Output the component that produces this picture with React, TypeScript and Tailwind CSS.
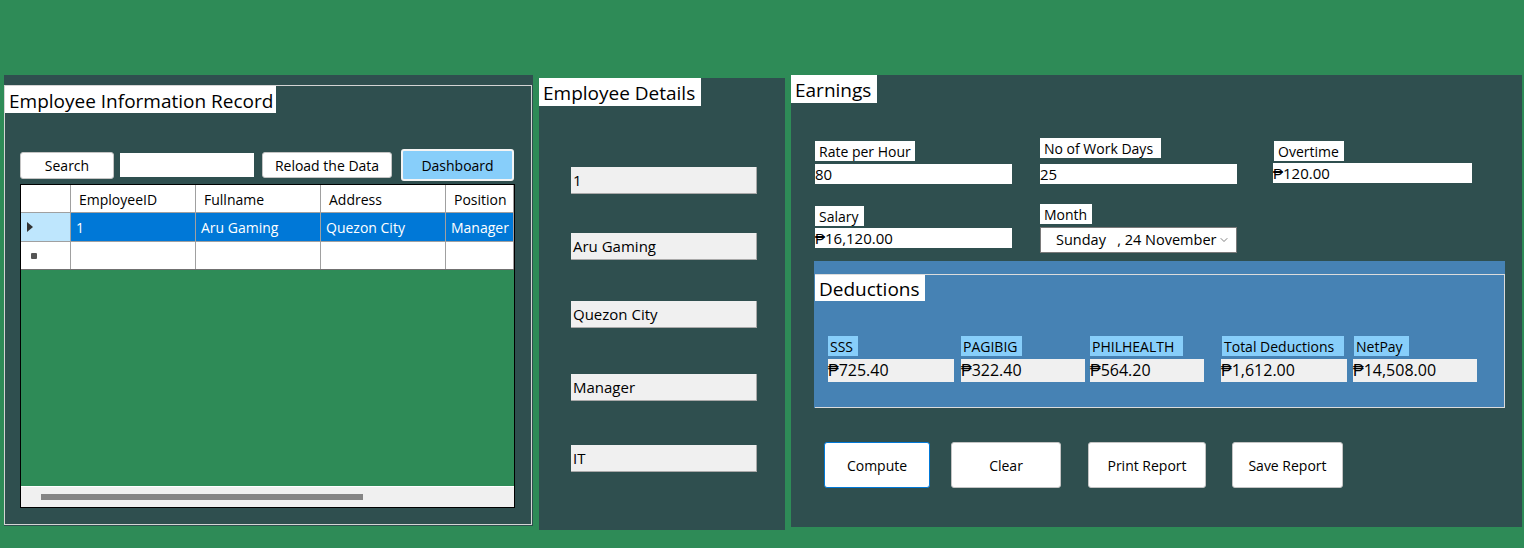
import { ChevronDown } from 'lucide-react'

const panel = 'bg-[#2F4F4F]'

function WinButton({ label, className }: { label: string; className: string }) {
    return (
        <div className={`flex items-center justify-center bg-white border border-[#c4c4c4] rounded-[3px] text-[14px] text-black ${className}`}>
            {label}
        </div>
    )
}

function GrayBox({ value, className }: { value: string; className: string }) {
    return (
        <div className={`flex items-center bg-[#F0F0F0] border-b border-r border-[#a9a9a9] pl-[2px] text-[15px] text-black ${className}`}>
            {value}
        </div>
    )
}

export default function App() {
    const columns = [
        { name: 'EmployeeID', value: '1', w: 'w-[125px]' },
        { name: 'Fullname', value: 'Aru Gaming', w: 'w-[125px]' },
        { name: 'Address', value: 'Quezon City', w: 'w-[125px]' },
        { name: 'Position', value: 'Manager', w: 'w-[68px]' }
    ]

    const deductions = [
        { label: 'SSS', value: '₱725.40', col: 'w-[126px] ml-[13px]', lab: 'w-[30px]' },
        { label: 'PAGIBIG', value: '₱322.40', col: 'w-[124px] ml-[7px]', lab: 'w-[61px]' },
        { label: 'PHILHEALTH', value: '₱564.20', col: 'w-[114px] ml-[5px]', lab: 'w-[93px]' },
        { label: 'Total Deductions', value: '₱1,612.00', col: 'w-[126px] ml-[17px]', lab: 'w-[122px] ml-[1px]' },
        { label: 'NetPay', value: '₱14,508.00', col: 'w-[124px] ml-[6px]', lab: 'w-[55px] ml-[1px]' }
    ]

    return (
        <div className="w-[1524px] h-[548px] overflow-hidden bg-[#2E8B57] flex items-start pt-[75px] pl-[4px] font-['Open_Sans',sans-serif] text-black">
            {/* Employee Information Record */}
            <div className={`${panel} w-[529px] h-[451px] pt-[10px] pr-[1px] pb-[1px]`}>
                <div className="h-full border border-[#d4d4d4]">
                    <div className="w-[271px] h-[27px] bg-white pl-[4px] pt-[3px] text-[19px] leading-[24px]">
                        Employee Information Record
                    </div>

                    <div className="flex items-center h-[32px] mt-[36px] pl-[15px]">
                        <WinButton label="Search" className="w-[94px] h-[27px]" />
                        <div className="w-[134px] h-[24px] bg-white ml-[6px]" />
                        <WinButton label="Reload the Data" className="w-[130px] h-[26px] ml-[8px]" />
                        <div className="w-[113px] h-[32px] ml-[9px] flex items-center justify-center bg-[#87CEFA] border-2 border-[#f4f4f4] rounded-[3px] text-[14px]">
                            Dashboard
                        </div>
                    </div>

                    {/* grid */}
                    <div className="w-[495px] h-[324px] ml-[15px] mt-[3px] border border-black bg-[#2E8B57] flex flex-col overflow-hidden">
                        <div className="flex h-[28px] bg-white border-b border-[#a0a0a0] text-[14px]">
                            <div className="w-[50px] border-r border-[#a0a0a0]" />
                            {columns.map((c) => (
                                <div key={c.name} className={`${c.w} pl-[8px] pt-[1px] flex items-center border-r border-[#a0a0a0] whitespace-nowrap overflow-hidden`}>
                                    {c.name}
                                </div>
                            ))}
                        </div>
                        <div className="flex h-[29px] border-b border-[#a0a0a0] text-[14px]">
                            <div className="w-[50px] bg-[#BEE6FD] border-r border-[#a0a0a0] flex items-center pl-[5px]">
                                <svg width="8" height="12" viewBox="0 0 8 12"><path d="M1 1 L7 6 L1 11 Z" fill="#333" /></svg>
                            </div>
                            {columns.map((c) => (
                                <div key={c.name} className={`${c.w} bg-[#0078D7] text-white pl-[5px] pt-[1px] flex items-center border-r border-[#a0a0a0] whitespace-nowrap overflow-hidden`}>
                                    {c.value}
                                </div>
                            ))}
                        </div>
                        <div className="flex h-[28px] bg-white border-b border-[#707070]">
                            <div className="w-[50px] border-r border-[#a0a0a0] flex items-center pl-[10px]">
                                <div className="w-[6px] h-[6px] rounded-[1px] bg-[#555]" />
                            </div>
                            {columns.map((c) => (
                                <div key={c.name} className={`${c.w} border-r border-[#a0a0a0]`} />
                            ))}
                        </div>
                        <div className="flex-1" />
                        <div className="h-[21px] bg-[#F0F0F0] flex items-center border-t border-white">
                            <div className="w-[322px] h-[6px] ml-[20px] bg-[#858585]" />
                        </div>
                    </div>
                </div>
            </div>

            {/* Employee Details */}
            <div className={`${panel} w-[246px] h-[452px] mt-[3px] ml-[6px]`}>
                <div className="w-[162px] h-[28px] bg-white pl-[4px] pt-[2px] text-[19px] leading-[26px]">
                    Employee Details
                </div>
                <GrayBox value="1" className="w-[186px] h-[27px] ml-[32px] mt-[61px]" />
                <GrayBox value="Aru Gaming" className="w-[186px] h-[27px] ml-[32px] mt-[39px]" />
                <GrayBox value="Quezon City" className="w-[186px] h-[27px] ml-[32px] mt-[41px]" />
                <GrayBox value="Manager" className="w-[186px] h-[27px] ml-[32px] mt-[46px]" />
                <GrayBox value="IT" className="w-[186px] h-[27px] ml-[32px] mt-[44px]" />
            </div>

            {/* Earnings */}
            <div className={`${panel} w-[731px] h-[452px] ml-[6px]`}>
                <div className="w-[86px] h-[28px] bg-white pl-[4px] pt-[2px] text-[19px] leading-[26px]">
                    Earnings
                </div>

                <div className="flex items-start h-[81px]">
                    <div className="flex flex-col ml-[24px] mt-[38px] w-[197px]">
                        <div className="w-[100px] h-[20px] bg-white pl-[4px] pt-[1px] text-[14px] leading-[19px]">Rate per Hour</div>
                        <div className="h-[20px] bg-white mt-[3px] text-[15px] leading-[20px]">80</div>
                    </div>
                    <div className="flex flex-col ml-[28px] mt-[35px] w-[197px]">
                        <div className="w-[121px] h-[20px] bg-white pl-[4px] pt-[1px] text-[14px] leading-[19px]">No of Work Days</div>
                        <div className="h-[20px] bg-white mt-[6px] text-[15px] leading-[20px]">25</div>
                    </div>
                    <div className="flex flex-col ml-[36px] mt-[38px] w-[199px]">
                        <div className="w-[70px] h-[20px] bg-white pl-[4px] pt-[1px] ml-[1px] text-[14px] leading-[19px]">Overtime</div>
                        <div className="h-[20px] bg-white mt-[2px] text-[15px] leading-[20px]">₱120.00</div>
                    </div>
                </div>

                <div className="flex items-start h-[69px]">
                    <div className="flex flex-col ml-[24px] mt-[22px] w-[197px]">
                        <div className="w-[49px] h-[20px] bg-white pl-[4px] pt-[1px] text-[14px] leading-[19px]">Salary</div>
                        <div className="h-[20px] bg-white mt-[2px] text-[15px] leading-[20px]">₱16,120.00</div>
                    </div>
                    <div className="flex flex-col ml-[28px] mt-[20px] w-[197px]">
                        <div className="w-[52px] h-[20px] bg-white pl-[4px] pt-[1px] text-[14px] leading-[19px]">Month</div>
                        <div className="h-[26px] mt-[3px] bg-white border border-[#7a7a7a] flex items-center pl-[15px] pr-[6px] text-[14.5px]">
                            <span className="whitespace-pre">Sunday   , 24 November</span>
                            <ChevronDown className="ml-auto w-[12px] h-[12px] text-[#555]" strokeWidth={1.5} />
                        </div>
                    </div>
                </div>

                {/* Deductions */}
                <div className="w-[691px] h-[147px] ml-[23px] mt-[8px] bg-[#4682B4] pt-[13px] pl-[1px]">
                    <div className="h-[134px] border border-[#dcdcdc] border-l-0">
                        <div className="w-[110px] h-[26px] bg-white pl-[4px] pt-[2px] text-[19px] leading-[24px]">
                            Deductions
                        </div>
                        <div className="flex items-start mt-[35px]">
                            {deductions.map((d) => (
                                <div key={d.label} className={`flex flex-col ${d.col}`}>
                                    <div className={`h-[20px] bg-[#87CEFA] pl-[2px] pt-[1px] text-[14px] leading-[19px] whitespace-nowrap ${d.lab}`}>
                                        {d.label}
                                    </div>
                                    <div className="h-[23px] mt-[3px] bg-[#F0F0F0] text-[16px] leading-[23px] whitespace-nowrap">
                                        {d.value}
                                    </div>
                                </div>
                            ))}
                        </div>
                    </div>
                </div>

                <div className="flex items-start mt-[34px] ml-[33px]">
                    <div className="w-[106px] h-[46px] flex items-center justify-center bg-white border border-[#0078D7] rounded-[3px] text-[14px]">
                        Compute
                    </div>
                    <WinButton label="Clear" className="w-[110px] h-[46px] ml-[21px]" />
                    <WinButton label="Print Report" className="w-[118px] h-[46px] ml-[27px]" />
                    <WinButton label="Save Report" className="w-[111px] h-[46px] ml-[26px]" />
                </div>
            </div>
        </div>
    )
}
